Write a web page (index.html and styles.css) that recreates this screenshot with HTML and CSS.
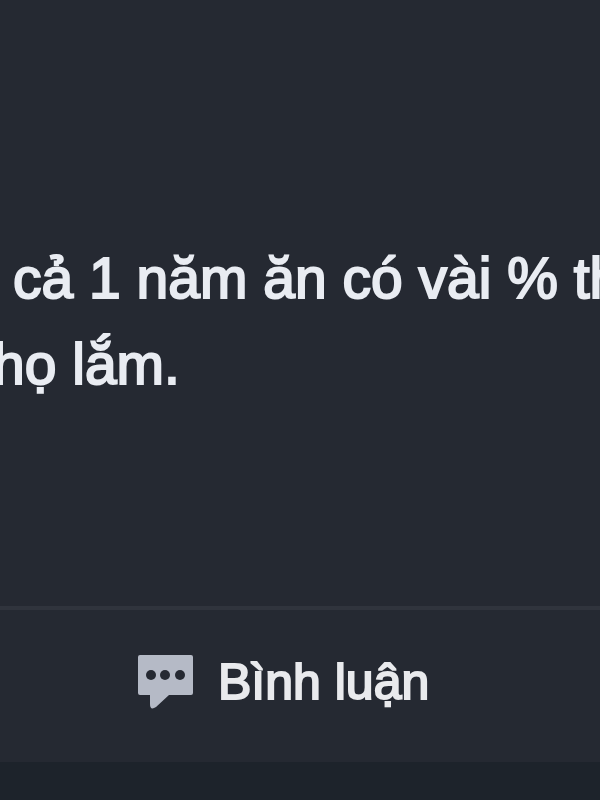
FILE: index.html
```
<!DOCTYPE html>
<html lang="vi">
<head>
    <meta charset="UTF-8">
    <meta name="viewport" content="width=device-width, initial-scale=1.0">
    <title>Bình luận</title>
    <link rel="stylesheet" href="styles.css">
</head>
<body>
    <article class="post">
        <div class="post-text">
            <p class="line line-first">cả 1 năm ăn có vài % th</p>
            <p class="line line-last">họ lắm.</p>
        </div>
        <div class="actions">
            <button type="button" class="comment-btn">
                <svg class="comment-icon" viewBox="0 0 56 56" aria-hidden="true">
                    <path fill="#b5bac6" d="M2 1H53Q55 1 55 3V39Q55 41 53 41H31L18 53Q12 57 12 50V41H2Q0 41 0 39V3Q0 1 2 1Z"/>
                    <circle cx="13" cy="21" r="5" fill="#252932"/>
                    <circle cx="27" cy="21" r="5" fill="#252932"/>
                    <circle cx="42" cy="21" r="5" fill="#252932"/>
                </svg>
                <span>Bình luận</span>
            </button>
        </div>
    </article>
</body>
</html>
```

FILE: styles.css
```
body {
    margin: 0;
    background-color: #1d232b;
    font-family: "Liberation Sans", Arial, sans-serif;
    overflow: hidden;
}

.post {
    background-color: #252932;
}

.post-text {
    padding: 235px 0 199px;
    color: #e9ecf2;
    font-size: 57px;
    line-height: 86px;
    -webkit-text-stroke: 2px #e9ecf2;
}

.line {
    margin: 0;
    white-space: nowrap;
}

.line-first {
    padding-left: 13px;
}

.line-last {
    margin-left: -7px;
}

.actions {
    display: flex;
    padding: 0 0 8px 138px;
    border-top: 4px solid #30343d;
}

.comment-btn {
    display: flex;
    align-items: center;
    gap: 24px;
    height: 144px;
    padding: 0;
    border: none;
    background: none;
    color: #e9eaed;
    font-family: inherit;
    font-size: 50px;
    white-space: nowrap;
    cursor: pointer;
    -webkit-text-stroke: 2px #e9eaed;
}

.comment-icon {
    width: 56px;
    height: 56px;
    -webkit-text-stroke: 0;
}
```
